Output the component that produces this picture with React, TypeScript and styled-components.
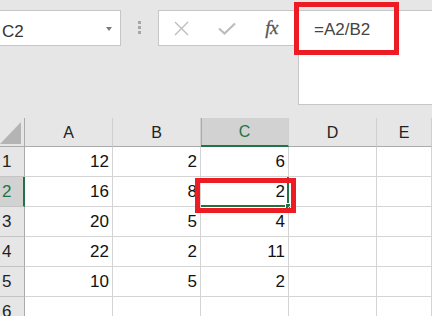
import { Fragment } from "react";
import styled, { createGlobalStyle } from "styled-components";

const GlobalStyle = createGlobalStyle`
  html, body {
    margin: 0;
    padding: 0;
    background: #e6e6e6;
  }
  * {
    box-sizing: border-box;
  }
`;

const green = "#217346";
const red = "#ed1c24";

const Page = styled.div`
  position: relative;
  width: 432px;
  height: 316px;
  overflow: hidden;
  background: #e6e6e6;
  font-family: "Liberation Sans", Arial, sans-serif;
`;

const Toolbar = styled.div`
  display: flex;
  align-items: flex-start;
  height: 118px;
  padding-top: 10px;
`;

const NameBox = styled.div`
  display: flex;
  align-items: flex-start;
  width: 121px;
  height: 36px;
  padding: 11px 0 0 2px;
  background: #fff;
  border: 1px solid #c6c6c6;
  border-left: none;
  font-size: 17px;
  line-height: 20px;
  color: #333;
`;

const DropArrow = styled.span`
  margin: 5px 8px 0 auto;
  width: 0;
  height: 0;
  border-left: 3.5px solid transparent;
  border-right: 3.5px solid transparent;
  border-top: 4px solid #7a7a7a;
`;

const Grip = styled.div`
  display: flex;
  flex-direction: column;
  align-items: center;
  gap: 2px;
  width: 37px;
  padding-top: 11px;
`;

const GripDot = styled.span`
  width: 3px;
  height: 3px;
  background: #a6a6a6;
`;

const FxButtons = styled.div`
  display: flex;
  align-items: center;
  width: 140px;
  height: 36px;
  background: #fff;
  border: 1px solid #c6c6c6;
  border-right: none;
`;

const FxButton = styled.div`
  display: flex;
  align-items: center;
  justify-content: center;
  width: 45px;
  height: 100%;
`;

const FxLabel = styled.span`
  font-family: "Liberation Serif", "Times New Roman", serif;
  font-style: italic;
  font-size: 19px;
  color: #555;
  letter-spacing: -0.5px;
  -webkit-text-stroke: 0.3px #555;
`;

const FormulaBar = styled.div`
  flex: 1;
  height: 95px;
  padding: 9px 0 0 15px;
  background: #fff;
  border: 1px solid #c6c6c6;
  border-right: none;
  font-size: 17px;
  line-height: 20px;
  color: #444;
`;

const Callout = styled.div<{ $x: number; $y: number; $w: number; $h: number }>`
  position: absolute;
  left: ${(p) => p.$x}px;
  top: ${(p) => p.$y}px;
  width: ${(p) => p.$w}px;
  height: ${(p) => p.$h}px;
  border: 5px solid ${red};
  pointer-events: none;
`;

const Sheet = styled.div`
  display: grid;
  grid-template-columns: 25px 88px 88px 88px 88px 1fr;
  grid-auto-rows: 30px;
  grid-template-rows: 29px;
  background: #fff;
`;

const Corner = styled.div`
  position: relative;
  background: #e6e6e6;
  border-right: 1px solid #ababab;
  border-bottom: 1px solid #ababab;
`;

const CornerTriangle = styled.div`
  position: absolute;
  left: 0;
  top: 4px;
  width: 21px;
  height: 22px;
  background: #b4b4b4;
  clip-path: polygon(100% 0, 100% 100%, 0 100%);
`;

const ColHeader = styled.div<{ $active?: boolean }>`
  display: flex;
  align-items: center;
  justify-content: center;
  background: ${(p) => (p.$active ? "#d2d2d2" : "#e6e6e6")};
  border-right: 1px solid #cfcfcf;
  border-bottom: ${(p) => (p.$active ? `2px solid ${green}` : "1px solid #ababab")};
  box-shadow: ${(p) => (p.$active ? "inset 1px 0 0 #ababab" : "none")};
  font-size: 16px;
  color: ${(p) => (p.$active ? green : "#222")};
  padding-top: 1px;
`;

const RowHeader = styled.div<{ $active?: boolean }>`
  display: flex;
  align-items: center;
  padding-left: 2px;
  background: ${(p) => (p.$active ? "#d2d2d2" : "#e6e6e6")};
  border-right: ${(p) => (p.$active ? `2px solid ${green}` : "1px solid #ababab")};
  border-bottom: 1px solid #c4c4c4;
  font-size: 17px;
  color: ${(p) => (p.$active ? green : "#222")};
`;

const Cell = styled.div`
  position: relative;
  display: flex;
  align-items: center;
  justify-content: flex-end;
  padding-right: 3px;
  border-right: 1px solid #d4d4d4;
  border-bottom: 1px solid #d4d4d4;
  font-size: 17px;
  color: #111;
`;

const ActiveFrame = styled.div`
  position: absolute;
  left: 0;
  top: 0;
  right: -1px;
  bottom: -1px;
  border-right: 2px solid ${green};
  border-bottom: 2px solid ${green};
`;

const FillHandle = styled.div`
  position: absolute;
  right: -3px;
  bottom: -3px;
  width: 6px;
  height: 6px;
  background: ${green};
  border: 1px solid #fff;
`;

const columns = ["A", "B", "C", "D", "E"];
const rows: (number | null)[][] = [
  [12, 2, 6],
  [16, 8, 2],
  [20, 5, 4],
  [22, 2, 11],
  [10, 5, 2],
  [null, null, null],
];

const App = () => {
  return (
    <Page>
      <GlobalStyle />
      <Toolbar>
        <NameBox>
          C2
          <DropArrow />
        </NameBox>
        <Grip>
          <GripDot />
          <GripDot />
          <GripDot />
        </Grip>
        <FxButtons>
          <FxButton>
            <svg width="15" height="15" viewBox="0 0 15 15">
              <path d="M1 1 L14 14 M14 1 L1 14" stroke="#bdbdbd" strokeWidth="1.4" fill="none" />
            </svg>
          </FxButton>
          <FxButton>
            <svg width="18" height="13" viewBox="0 0 18 13">
              <path d="M1 6.5 L6.5 11.5 L17 1.5" stroke="#bdbdbd" strokeWidth="2.2" fill="none" />
            </svg>
          </FxButton>
          <FxButton>
            <FxLabel>fx</FxLabel>
          </FxButton>
        </FxButtons>
        <FormulaBar>=A2/B2</FormulaBar>
      </Toolbar>
      <Sheet>
        <Corner>
          <CornerTriangle />
        </Corner>
        {columns.map((c) => (
          <ColHeader key={c} $active={c === "C"}>
            {c}
          </ColHeader>
        ))}
        {rows.map((r, i) => (
          <Fragment key={i}>
            <RowHeader $active={i === 1}>{i + 1}</RowHeader>
            {r.map((v, j) => (
              <Cell key={j}>
                {v}
                {i === 1 && j === 2 && (
                  <>
                    <ActiveFrame />
                    <FillHandle />
                  </>
                )}
              </Cell>
            ))}
            <Cell />
            <Cell />
          </Fragment>
        ))}
      </Sheet>
      <Callout $x={294} $y={2} $w={105} $h={53} />
      <Callout $x={195} $y={178} $w={101} $h={35} />
    </Page>
  );
};

export default App;
